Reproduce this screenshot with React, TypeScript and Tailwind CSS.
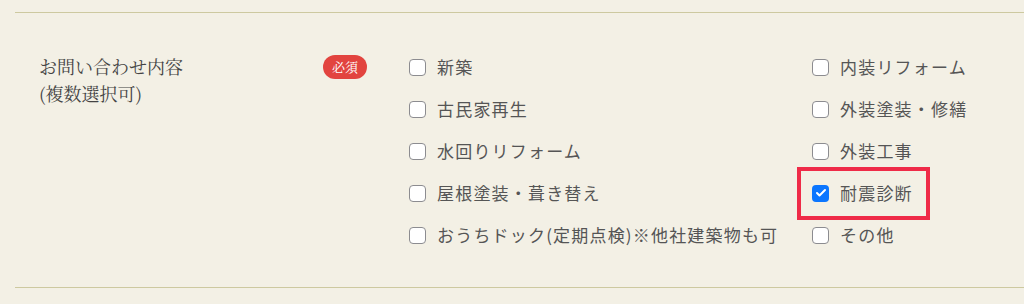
import { Check } from "lucide-react";

const leftOptions = [
  { label: "新築", checked: false },
  { label: "古民家再生", checked: false },
  { label: "水回りリフォーム", checked: false },
  { label: "屋根塗装・葺き替え", checked: false },
  { label: "おうちドック(定期点検)※他社建築物も可", checked: false },
];

const rightOptions = [
  { label: "内装リフォーム", checked: false },
  { label: "外装塗装・修繕", checked: false },
  { label: "外装工事", checked: false },
  { label: "耐震診断", checked: true, highlight: true },
  { label: "その他", checked: false },
];

const sans = { fontFamily: '"Noto Sans CJK JP", "Noto Sans", sans-serif' };
const serif = { fontFamily: '"Noto Serif CJK JP", "Liberation Serif", "Noto Sans CJK JP", serif' };

function Option({ label, checked, highlight }: { label: string; checked: boolean; highlight?: boolean }) {
  return (
    <label className="relative flex h-[42px] items-center gap-[11px] text-[17px] tracking-[0.07em] text-[#555]">
      {checked ? (
        <span className="flex h-[17px] w-[17px] shrink-0 items-center justify-center rounded-[4px] bg-[#0b76ff]">
          <Check className="h-3 w-3 text-white" strokeWidth={4} />
        </span>
      ) : (
        <span className="h-[17px] w-[17px] shrink-0 rounded-[4px] border-[1.5px] border-[#8c8c90] bg-white" />
      )}
      <span className="whitespace-nowrap">{label}</span>
      {highlight && (
        <span className="absolute left-[-15px] top-[-5px] h-[53px] w-[133px] border-[4px] border-[#ef2b48]" />
      )}
    </label>
  );
}

export default function App() {
  return (
    <div className="h-[304px] w-[1024px] bg-[#f3f0e5] pt-3" style={sans}>
      <div className="ml-[15px] flex border-y border-[#cdc9a0] pb-[31px] pt-[33px]">
        <div className="mt-[7px] w-[308px] pl-6 text-[18px] leading-[27px] text-[#444]" style={serif}>
          <p>お問い合わせ内容</p>
          <p>(複数選択可)</p>
        </div>
        <div className="w-[86px] pt-[9px]">
          <span
            className="flex h-6 w-11 items-center justify-center rounded-full bg-[#e2443f] text-[13px] text-white"
            style={serif}
          >
            必須
          </span>
        </div>
        <div className="grid grid-cols-[403px_1fr]">
          <div className="flex flex-col">
            {leftOptions.map((o) => (
              <Option key={o.label} {...o} />
            ))}
          </div>
          <div className="flex flex-col">
            {rightOptions.map((o) => (
              <Option key={o.label} {...o} />
            ))}
          </div>
        </div>
      </div>
    </div>
  );
}
